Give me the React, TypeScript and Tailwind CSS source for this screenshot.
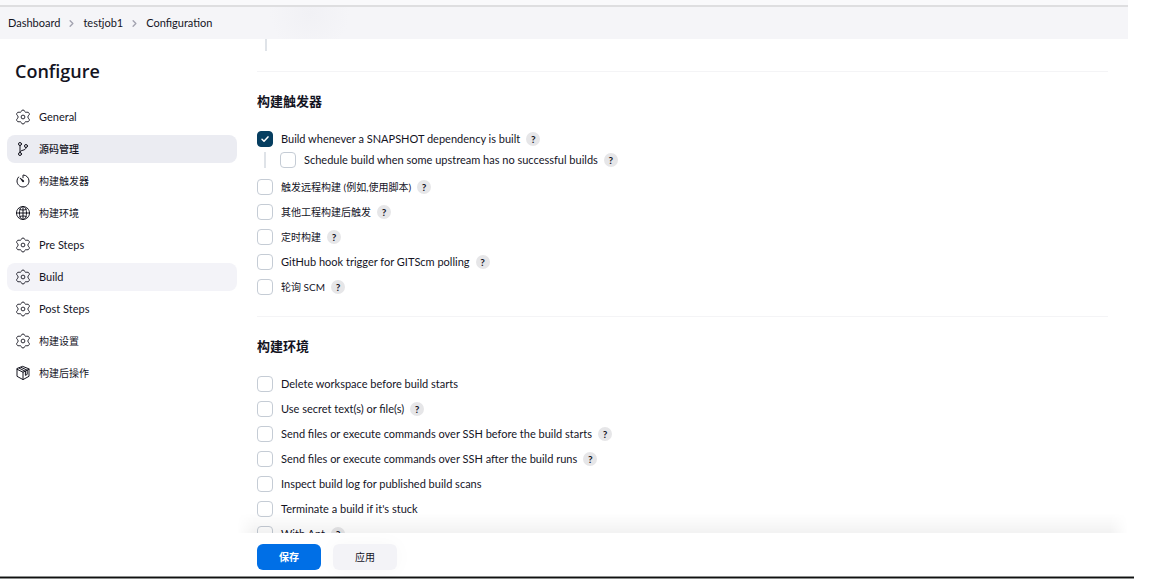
import { useState } from 'react'
import type { ComponentType } from 'react'
import { IoGitBranchOutline, IoTimerOutline, IoGlobeOutline } from 'react-icons/io5'
import { ChevronRight } from 'lucide-react'

type Option = { label: string; help?: boolean; nested?: boolean; checked?: boolean }
type NavItem = { label: string; icon: ComponentType<{ size?: number }>; state?: 'active' | 'hover' }

const CRUMBS = ['Dashboard', 'testjob1', 'Configuration']

const NAV: NavItem[] = [
  { label: 'General', icon: GearIcon },
  { label: '源码管理', icon: IoGitBranchOutline, state: 'active' },
  { label: '构建触发器', icon: IoTimerOutline },
  { label: '构建环境', icon: IoGlobeOutline },
  { label: 'Pre Steps', icon: GearIcon },
  { label: 'Build', icon: GearIcon, state: 'hover' },
  { label: 'Post Steps', icon: GearIcon },
  { label: '构建设置', icon: GearIcon },
  { label: '构建后操作', icon: PackageIcon },
]

const TRIGGERS: Option[] = [
  { label: 'Build whenever a SNAPSHOT dependency is built', help: true, checked: true },
  { label: 'Schedule build when some upstream has no successful builds', help: true, nested: true },
  { label: '触发远程构建 (例如,使用脚本)', help: true },
  { label: '其他工程构建后触发', help: true },
  { label: '定时构建', help: true },
  { label: 'GitHub hook trigger for GITScm polling', help: true },
  { label: '轮询 SCM', help: true },
]

const ENVIRONMENT: Option[] = [
  { label: 'Delete workspace before build starts' },
  { label: 'Use secret text(s) or file(s)', help: true },
  { label: 'Send files or execute commands over SSH before the build starts', help: true },
  { label: 'Send files or execute commands over SSH after the build runs', help: true },
  { label: 'Inspect build log for published build scans' },
  { label: "Terminate a build if it's stuck" },
  { label: 'With Ant', help: true },
]

// Han glyphs look a size larger than Latin ones, so they are set one step smaller
const labelSize = (label: string) => (/[\u4e00-\u9fff]/.test(label) ? 'text-[10px]' : 'text-[11px]')

export default function App() {
  return (
    <div className="h-screen flex flex-col overflow-hidden bg-white text-[#14141f] text-[11px] leading-4 font-['Lato','Noto_Sans_CJK_SC',sans-serif]">
      <div className="flex-1 min-h-0 flex flex-col mr-[27px]">
        <Breadcrumbs />
        <div className="flex-1 min-h-0 flex">
          <Sidebar />
          <div className="flex-1 min-w-0 flex flex-col pl-5">
            <main className="flex-1 min-h-0 overflow-hidden pr-5">
              <div className="ml-2 h-3 border-l-2 border-[#dfe3e8]" />
              <Section title="构建触发器" options={TRIGGERS} first />
              <Section title="构建环境" options={ENVIRONMENT} />
            </main>
            <BottomBar />
          </div>
        </div>
      </div>
      <div className="h-[3px] mb-px mr-[21px] border-y border-[#8c8f8e] bg-[#111]" />
    </div>
  )
}

function Breadcrumbs() {
  return (
    <header className="flex-shrink-0">
      <div className="h-[7px] bg-[#f9f9fb] border-b-2 border-[#dedee0]" />
      <nav className="h-8 flex items-center gap-[6px] px-2 bg-[#f5f5f8] bg-[radial-gradient(circle_at_310px_6px,#f1f1f5,transparent_40px)]">
        {CRUMBS.map((crumb, i) => (
          <div key={crumb} className="flex items-center gap-[6px]">
            {i > 0 && <ChevronRight size={11} strokeWidth={3} className="text-[#a3a3b0]" />}
            <a href="#">{crumb}</a>
          </div>
        ))}
      </nav>
    </header>
  )
}

function Sidebar() {
  return (
    <aside className="w-[237px] flex-shrink-0 pl-[7px] pt-5">
      <h1 className="px-2 text-[18px] leading-6 font-semibold font-['Open_Sans',sans-serif]">Configure</h1>
      <nav className="mt-5 flex flex-col gap-1">
        {NAV.map(({ label, icon: Icon, state }) => (
          <a
            key={label}
            href="#"
            className={`h-7 flex items-center gap-2 px-2 rounded-lg ${
              state === 'active' ? 'bg-[#ebecf2] font-medium' : state === 'hover' ? 'bg-[#f3f3f8]' : ''
            }`}
          >
            <Icon size={16} />
            <span className={labelSize(label)}>{label}</span>
          </a>
        ))}
      </nav>
    </aside>
  )
}

function Section({ title, options, first }: { title: string; options: Option[]; first?: boolean }) {
  return (
    <section className={`border-t border-[#f4f4f6] pt-[19px] ${first ? 'mt-5' : 'mt-[17px]'}`}>
      <h2 className="text-[13px] leading-5 font-bold">{title}</h2>
      <div className="mt-[15px] flex flex-col">
        {options.map((option) => (
          <OptionRow key={option.label} option={option} />
        ))}
      </div>
    </section>
  )
}

function OptionRow({ option }: { option: Option }) {
  const [checked, setChecked] = useState(!!option.checked)

  return (
    <div
      className={
        option.nested
          ? 'ml-[7px] h-4 mt-px mb-[6px] flex items-center border-l-2 border-[#dfe3e8] pl-[14px]'
          : 'h-[25px] flex items-center'
      }
    >
      <label className="flex items-center gap-2">
        <span className="grid">
          <input
            type="checkbox"
            checked={checked}
            onChange={(e) => setChecked(e.target.checked)}
            className="col-start-1 row-start-1 w-4 h-4 appearance-none rounded border border-[#c5ccd5] bg-white checked:bg-[#063e60] checked:border-[#063e60]"
          />
          {checked && (
            <svg
              viewBox="0 0 16 16"
              className="col-start-1 row-start-1 w-4 h-4 pointer-events-none"
              fill="none"
              stroke="#fff"
              strokeWidth="1.5"
              strokeLinecap="round"
              strokeLinejoin="round"
            >
              <path d="M5 8.3l2 2 4-4.4" />
            </svg>
          )}
        </span>
        <span className={labelSize(option.label)}>{option.label}</span>
      </label>
      {option.help && (
        <button
          aria-label="Help"
          className="ml-[6px] w-[14px] h-[14px] rounded-full bg-[#e6e6e8] text-[10px] leading-[14px] font-bold"
        >
          ?
        </button>
      )}
    </div>
  )
}

function BottomBar() {
  return (
    <div className="relative flex-shrink-0 h-[43px] flex items-end gap-3 pb-[6px] bg-white text-[10px]">
      {/* fade above the sticky bar */}
      <div className="absolute bottom-full -left-5 right-0 h-5 pointer-events-none bg-linear-to-t from-black/5 to-transparent mask-x-from-98%" />
      <button className="w-16 h-[26px] rounded-md bg-[#006fe6] text-white font-bold">保存</button>
      <button className="w-16 h-[26px] rounded-md bg-[#f3f3f7] shadow-[0_0_20px_rgba(0,0,0,0.03)]">应用</button>
    </div>
  )
}

function GearIcon({ size = 16 }: { size?: number }) {
  return (
    <svg width={size} height={size} viewBox="0 0 16 16" fill="none" stroke="currentColor" strokeWidth="0.9" strokeLinejoin="round">
      <path d="M8 1Q9.4 1 9.8 2.6Q10.5 3.8 11.9 3.2Q13.6 2.9 14.2 4.4Q14.8 5.9 13.3 6.8Q12.3 8 13.3 9.2Q14.8 10.1 14.2 11.6Q13.6 13.1 11.9 12.8Q10.5 12.2 9.8 13.4Q9.4 15 8 15Q6.6 15 6.2 13.4Q5.5 12.2 4.1 12.8Q2.4 13.1 1.8 11.6Q1.2 10.1 2.7 9.2Q3.7 8 2.7 6.8Q1.2 5.9 1.8 4.4Q2.4 2.9 4.1 3.2Q5.5 3.8 6.2 2.6Q6.6 1 8 1Z" />
      <circle cx="8" cy="8" r="1.9" />
    </svg>
  )
}

function PackageIcon({ size = 16 }: { size?: number }) {
  return (
    <svg width={size} height={size} viewBox="0 0 16 16" fill="none" stroke="currentColor" strokeLinecap="round" strokeLinejoin="round">
      <path d="M8 1.5l6 2.4v7.4L8 14.6 2 11.3V3.9z" />
      <path d="M2 4.2l6 3 6-3M8 7.2v7.2M4.2 3.2l6 3M6.2 2.4l6 2.8M10.4 6.4v4l1.8-1V5.4" />
    </svg>
  )
}
